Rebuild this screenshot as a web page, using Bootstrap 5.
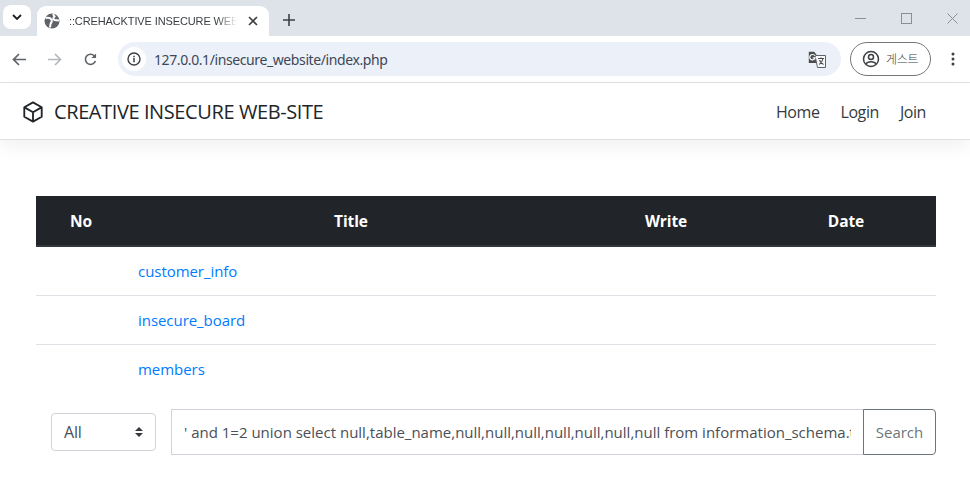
<!DOCTYPE html>
<html lang="en">
<head>
<meta charset="utf-8">
<title>CREATIVE INSECURE WEB-SITE</title>
<link rel="stylesheet" href="https://cdn.jsdelivr.net/npm/bootstrap@5.3.0/dist/css/bootstrap.min.css">
<style>
html,body{height:493px;overflow:hidden;background:#fff;}
body{font-family:"Open Sans","Noto Sans",sans-serif;font-size:16px;color:#212529;}
.tabstrip{height:36px;background:#dee3ea;padding:6px 0 0 3px;}
.tabmenu{width:28px;height:24px;background:#fff;border-radius:8px;margin-top:-1px;}
.tabcard{width:232px;height:30px;margin-left:6px;background:#fff;border-radius:9px 9px 0 0;padding:0 11px 0 7px;font-family:"Liberation Sans",sans-serif;font-size:11px;color:#3c4043;}
.tabtitle{width:168px;margin-left:9px;white-space:nowrap;overflow:hidden;letter-spacing:-.12px;-webkit-mask-image:linear-gradient(90deg,#000 88%,transparent);mask-image:linear-gradient(90deg,#000 88%,transparent);}
.newtab{margin-left:14px;}
.winctl{gap:35px;padding:0 12px 0 0;margin-top:-6px;}
.toolbar{height:47px;border-bottom:1px solid #dfe1e4;padding:0 0 0 12px;}
.toolstep{margin-left:22px;}
.omni{width:723px;height:34px;margin-left:21px;background:#ecf1f9;border-radius:17px;padding:0 15px 0 4px;color:#3c4757;}
.infochip{width:24px;height:24px;border-radius:50%;background:#fff;margin-right:8px;}
.urltxt{font-family:"Noto Sans",sans-serif;font-size:14px;letter-spacing:-.4px;}
.guest{width:81px;height:34px;margin-left:9px;border:1px solid #747775;border-radius:17px;padding-left:11px;font-size:12px;font-weight:300;letter-spacing:-.3px;color:#3c4043;font-family:"Noto Sans CJK KR",sans-serif;gap:6px;}
.menudots{margin-left:20px;}
.sitenav{height:57px;padding:1px 36px 0 22px;box-shadow:0 .5rem 1rem rgba(0,0,0,.05);border-bottom:1px solid #dee2e6;}
.sitenav .navbar-brand{font-size:20px;color:#212529;padding:0;margin:0;gap:10px;letter-spacing:-.4px;}
.sitenav .nav-link{color:#343a40;padding:0 .5rem;font-size:16px;letter-spacing:-.42px;margin-left:5px;}
.mainwrap{padding:56px 34px 0 36px;}
.boardtable{table-layout:fixed;margin:0;}
.boardtable th{background:#212529;color:#fff;text-align:center;border-bottom:2px solid #32383e;height:50px;vertical-align:middle;padding:3px 12px 0;font-weight:700;font-size:15.5px;letter-spacing:-.1px;}
.boardtable td{height:49px;padding:13px 12px 0;vertical-align:top;line-height:23px;border-bottom:1px solid #dee2e6;font-size:15px;letter-spacing:-.05px;}
.boardtable tr:last-child td{border-bottom:0;}
.boardtable a{color:#007bff;text-decoration:none;}
.searchrow{height:62px;padding-left:15px;align-items:flex-end;}
.pickbox{flex:0 0 105px;width:105px;height:38px;margin-bottom:4px;margin-right:15px;padding:0 12px;border:1px solid #ced4da;border-radius:4px;color:#495057;font-size:16px;letter-spacing:-.2px;background-position:right 12px center;background-size:8px 10px;background-image:url("data:image/svg+xml,%3Csvg xmlns='http://www.w3.org/2000/svg' viewBox='0 0 8 10'%3E%3Cpath fill='%23343a40' d='M4 0L8 4H0zM4 10L0 6h8z'/%3E%3C/svg%3E");}
.querybox{flex:1 1 auto;min-width:0;height:46px;border:1px solid #ced4da;border-radius:0;color:#495057;padding:0 12px;font-size:15px;letter-spacing:0;}
.gobtn{flex:0 0 73px;width:73px;height:46px;border-radius:0 4px 4px 0;border-color:#6c757d;color:#6c757d;font-size:15px;padding:0;margin-left:-1px;}
</style>
</head>
<body>
<div class="tabstrip d-flex">
  <div class="tabmenu d-flex align-items-center justify-content-center">
    <svg width="10" height="6" viewBox="0 0 10 6"><path d="M1 1l4 4 4-4" fill="none" stroke="#1f1f1f" stroke-width="1.8"/></svg>
  </div>
  <div class="tabcard d-flex align-items-center">
    <svg width="16" height="16" viewBox="0 0 16 16"><circle cx="8" cy="8" r="7.500" fill="#5f6368"/><path d="M1.500 5c2.500-.5 5 0 6 1.500 1 1.500 0 3-1 4.500l-.5 3.500M9 1l1.500 2.500c-1.500 1-1.500 2.500 0 3.500l4.500.5" fill="none" stroke="#fff" stroke-width="2"/></svg>
    <div class="tabtitle">::CREHACKTIVE INSECURE WEB-SITE</div>
    <svg class="ms-auto" width="10" height="10" viewBox="0 0 10 10"><path d="M1 1l8 8M9 1l-8 8" stroke="#3c4043" stroke-width="1.600"/></svg>
  </div>
  <svg class="newtab mt-2" width="12" height="12" viewBox="0 0 12 12"><path d="M6 0v12M0 6h12" stroke="#3c4043" stroke-width="1.600"/></svg>
  <div class="winctl ms-auto d-flex align-items-center">
    <svg width="11" height="11" viewBox="0 0 11 11"><path d="M0 5.500h11" stroke="#8a8f96" stroke-width="1"/></svg>
    <svg width="11" height="11" viewBox="0 0 11 11"><rect x=".5" y=".5" width="10" height="10" fill="none" stroke="#8a8f96"/></svg>
    <svg width="11" height="11" viewBox="0 0 11 11"><path d="M.5.500l10 10M10.500.500l-10 10" stroke="#8a8f96"/></svg>
  </div>
</div>
<div class="toolbar d-flex align-items-center">
  <svg width="14" height="13" viewBox="0 0 14 13"><path d="M14 6.500H2M7 1L1.500 6.500 7 12" fill="none" stroke="#5f6368" stroke-width="1.700"/></svg>
  <svg class="toolstep" width="14" height="13" viewBox="0 0 14 13"><path d="M0 6.500h12M7 1l5.500 5.500L7 12" fill="none" stroke="#b4b7bb" stroke-width="1.700"/></svg>
  <svg class="toolstep" width="13" height="13" viewBox="0 0 14 14"><path d="M12.300 8.500A5.500 5.500 0 1 1 11 3l1.500 1.500" fill="none" stroke="#5f6368" stroke-width="1.700"/><path d="M13 .5v5H8z" fill="#5f6368"/></svg>
  <div class="omni d-flex align-items-center">
    <div class="infochip d-flex align-items-center justify-content-center">
      <svg width="14" height="14" viewBox="0 0 14 14"><circle cx="7" cy="7" r="6" fill="none" stroke="#3c4043" stroke-width="1.400"/><path d="M7 6v4.200M7 3.700v1.500" stroke="#3c4043" stroke-width="1.500"/></svg>
    </div>
    <span class="urltxt">127.0.0.1/insecure_website/index.php</span>
    <svg class="ms-auto" width="18" height="17" viewBox="0 0 18 17"><path d="M1 1h7l1 2h1l3.500 12H1z" fill="#4a4d50" transform="scale(.8)"/><path d="M7 4.500h10.500v12H9.500z" fill="#f7f8fa" stroke="#5f6368"/><path d="M7.200 4.800C6.500 3.800 5.500 3.500 4.500 3.500a2.700 2.700 0 1 0 2.600 3.400H4.800" fill="none" stroke="#fff" stroke-width="1.100"/><path d="M10 7.500h6M13 6.500v1M15 7.500c-.5 3-2 4.800-3.800 6M11.500 9c.8 2.200 2 3.600 4 4.500" fill="none" stroke="#4a4d50" stroke-width="1.100"/></svg>
  </div>
  <div class="guest d-flex align-items-center">
    <svg width="18" height="18" viewBox="0 0 18 18"><circle cx="9" cy="9" r="7.500" fill="none" stroke="#3c4043" stroke-width="1.500"/><circle cx="9" cy="7" r="2.500" fill="none" stroke="#3c4043" stroke-width="1.500"/><path d="M4 14c1.500-3 8.500-3 10 0" fill="none" stroke="#3c4043" stroke-width="1.500"/></svg>
    <span>게스트</span>
  </div>
  <svg class="menudots" width="4" height="14" viewBox="0 0 4 14"><circle cx="2" cy="2" r="1.500" fill="#3c4043"/><circle cx="2" cy="7" r="1.500" fill="#3c4043"/><circle cx="2" cy="12" r="1.500" fill="#3c4043"/></svg>
</div>
<nav class="navbar sitenav bg-white">
  <a class="navbar-brand d-flex align-items-center" href="#">
    <svg width="22" height="22" viewBox="0 0 24 24"><path d="M12 1.500l9.500 5.300v10.400L12 22.500l-9.500-5.300V6.800zM2.800 7L12 12.200 21.200 7M12 12.200v10" fill="none" stroke="#212529" stroke-width="2" stroke-linejoin="round"/></svg>
    <span>CREATIVE INSECURE WEB-SITE</span>
  </a>
  <ul class="navbar-nav flex-row">
    <li class="nav-item"><a class="nav-link" href="#">Home</a></li>
    <li class="nav-item"><a class="nav-link" href="#">Login</a></li>
    <li class="nav-item"><a class="nav-link" href="#">Join</a></li>
  </ul>
</nav>
<main class="mainwrap">
  <table class="table boardtable">
    <colgroup><col width="10%"><col width="50%"><col width="20%"><col width="20%"></colgroup>
    <thead><tr><th>No</th><th>Title</th><th>Write</th><th>Date</th></tr></thead>
    <tbody>
      <tr><td></td><td><a href="#">customer_info</a></td><td></td><td></td></tr>
      <tr><td></td><td><a href="#">insecure_board</a></td><td></td><td></td></tr>
      <tr><td></td><td><a href="#">members</a></td><td></td><td></td></tr>
    </tbody>
  </table>
  <form class="searchrow d-flex">
    <select class="form-select pickbox"><option>All</option></select>
    <input class="form-control querybox" type="text" value="' and 1=2 union select null,table_name,null,null,null,null,null,null,null from information_schema.tables#">
    <button class="btn btn-outline-secondary gobtn" type="button">Search</button>
  </form>
</main>
</body>
</html>
